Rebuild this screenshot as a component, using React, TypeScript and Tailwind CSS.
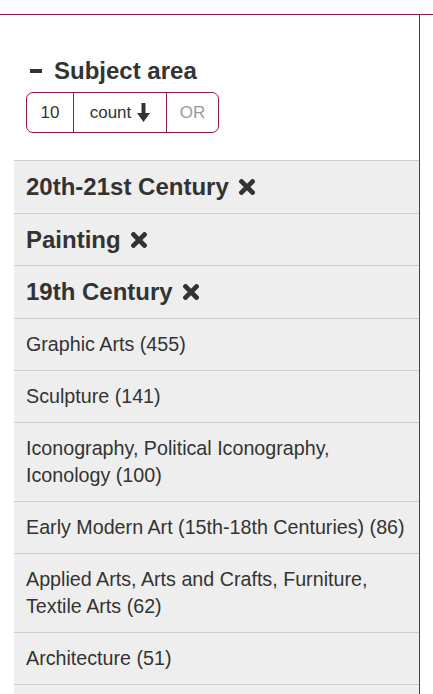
const SELECTED = ['20th-21st Century', 'Painting', '19th Century']

const FACETS = [
  'Graphic Arts (455)',
  'Sculpture (141)',
  'Iconography, Political Iconography, Iconology (100)',
  'Early Modern Art (15th-18th Centuries) (86)',
  'Applied Arts, Arts and Crafts, Furniture, Textile Arts (62)',
  'Architecture (51)',
]

function RemoveIcon() {
  return (
    <svg width="16" height="16" viewBox="0 0 16 16" className="ml-[10px] inline-block shrink-0">
      <path d="M2.5 2.5 L13.5 13.5 M13.5 2.5 L2.5 13.5" stroke="#333" strokeWidth="4.6" strokeLinecap="square" />
    </svg>
  )
}

function ArrowDown() {
  return (
    <svg width="13" height="19" viewBox="0 0 13 19" className="ml-[6px]">
      <path d="M4.5 0 H8.5 V10 H13 L6.5 19 L0 10 H4.5 Z" fill="#333" />
    </svg>
  )
}

export default function App() {
  return (
    <div className="min-h-[694px] bg-white text-[#333] [font-family:'Liberation_Sans',Arial,sans-serif]">
      <div className="h-[15px] border-b border-[#8c1d40]" />
      <div className="w-[420px] min-h-[679px] border-r border-[#8c1d40] pl-[14px]">
        {/* facet heading */}
        <div className="flex items-center pl-[16px] pt-[42px]">
          <span className="h-[4px] w-[12px] bg-[#333]" />
          <h2 className="ml-[12px] text-[24px] font-bold leading-[28px]">Subject area</h2>
        </div>

        {/* sort / limit controls */}
        <div className="ml-[12px] mt-[7px] flex h-[41px] w-[193px] overflow-hidden rounded-[7px] border border-[#8c1d40] text-[17px]">
          <div className="flex w-[46px] items-center justify-center">10</div>
          <div className="flex w-[93px] items-center justify-center border-l border-[#8c1d40]">
            count
            <ArrowDown />
          </div>
          <div className="flex flex-1 items-center justify-center border-l border-[#8c1d40] text-[#999]">OR</div>
        </div>

        <ul className="mt-[27px] bg-[#eeeeee]">
          {SELECTED.map((s) => (
            <li key={s} className="flex items-center border-t border-[#cccccc] px-[12px] py-[12px] text-[24px] font-bold leading-[27.7px]">
              {s}
              <RemoveIcon />
            </li>
          ))}
          {FACETS.map((f) => (
            <li key={f} className="border-t border-[#cccccc] py-[12px] pl-[12px] pr-[8px] text-[19.7px] leading-[27px]">
              {f}
            </li>
          ))}
          <li className="h-[40px] border-t border-[#cccccc]" />
        </ul>
      </div>
    </div>
  )
}
